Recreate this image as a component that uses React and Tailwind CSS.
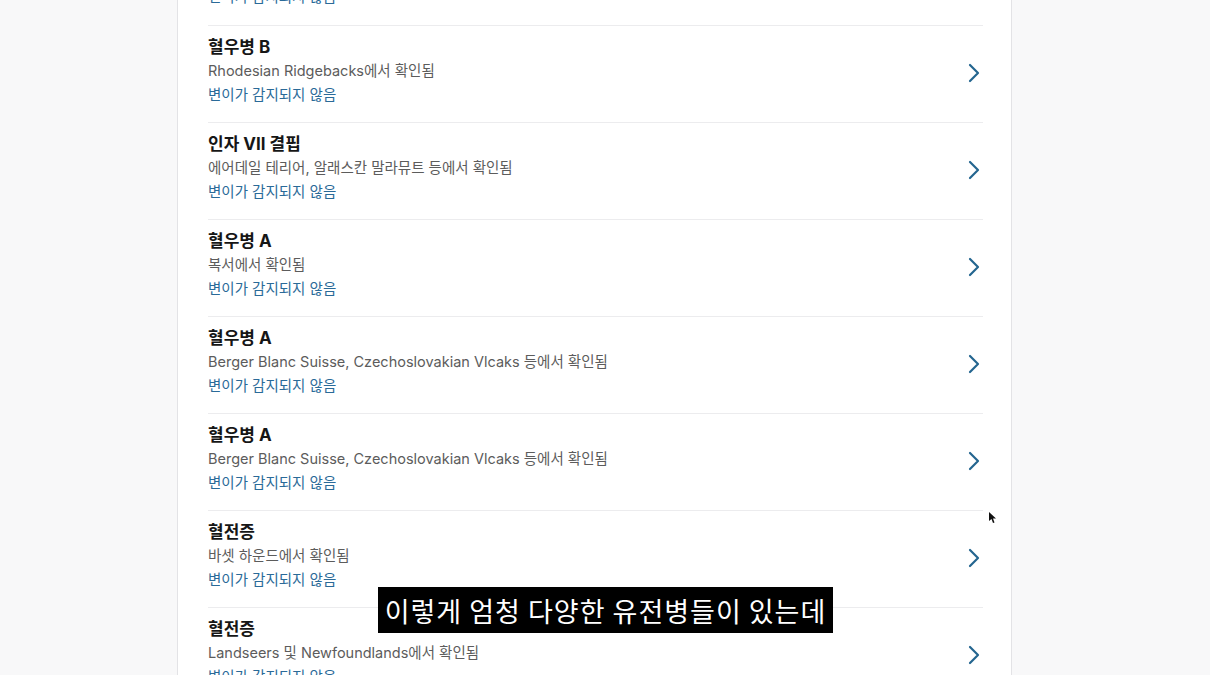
import React from 'react';

const rows = [
  { title: '혈우병 B', sub: 'Rhodesian Ridgebacks에서 확인됨' },
  { title: '혈우병 B', sub: 'Rhodesian Ridgebacks에서 확인됨' },
  { title: '인자 VII 결핍', sub: '에어데일 테리어, 알래스칸 말라뮤트 등에서 확인됨' },
  { title: '혈우병 A', sub: '복서에서 확인됨' },
  { title: '혈우병 A', sub: 'Berger Blanc Suisse, Czechoslovakian Vlcaks 등에서 확인됨' },
  { title: '혈우병 A', sub: 'Berger Blanc Suisse, Czechoslovakian Vlcaks 등에서 확인됨' },
  { title: '혈전증', sub: '바셋 하운드에서 확인됨' },
  { title: '혈전증', sub: 'Landseers 및 Newfoundlands에서 확인됨' },
];

const Chevron = () => (
  <svg width="16" height="20" viewBox="0 0 16 20" fill="none">
    <polyline points="4,2 12,10 4,18" stroke="#23658f" strokeWidth="2.2" strokeLinecap="round" strokeLinejoin="round" />
  </svg>
);

const App = () => {
  return (
    <div
      className="h-screen overflow-hidden bg-[#f8f8f9] relative"
      style={{ fontFamily: 'Inter, "Noto Sans CJK KR", sans-serif' }}
    >
      <div className="ml-[177px] w-[835px] h-full overflow-hidden bg-white border-x border-[#e3e3e6]">
        <div className="-mt-[72px] pl-[30px] pr-[28px]">
          {rows.map((r, i) => (
            <div
              key={i}
              className={`flex items-start justify-between h-[97px] pt-[9px] ${i > 0 ? 'border-t border-[#ececee]' : ''}`}
            >
              <div className="flex flex-col">
                <div className="text-[17px] leading-[24px] font-bold text-[#161616]">{r.title}</div>
                <div className="text-[14.5px] leading-[24px] text-[#5c5c5c]">{r.sub}</div>
                <div className="text-[14.5px] leading-[24px] text-[#2a6a98]">변이가 감지되지 않음</div>
              </div>
              <div className="self-center mb-[12px] mr-[1px]">
                <Chevron />
              </div>
            </div>
          ))}
        </div>
      </div>

      <div className="absolute left-[378px] top-[587px] w-[455px] h-[46px] bg-black flex items-center justify-center">
        <span
          className="text-white text-[27px] tracking-[1px] leading-none"
          style={{ fontFamily: '"Noto Sans CJK KR", sans-serif' }}
        >
          이렇게 엄청 다양한 유전병들이 있는데
        </span>
      </div>

      <svg className="absolute left-[989px] top-[512px]" width="8" height="12" viewBox="0 0 8 12">
        <polygon points="0,0 0,9 2.5,7 4,11 5.5,10.4 4,6.6 7,6.6" fill="#111" />
      </svg>
    </div>
  );
};

export default App;
